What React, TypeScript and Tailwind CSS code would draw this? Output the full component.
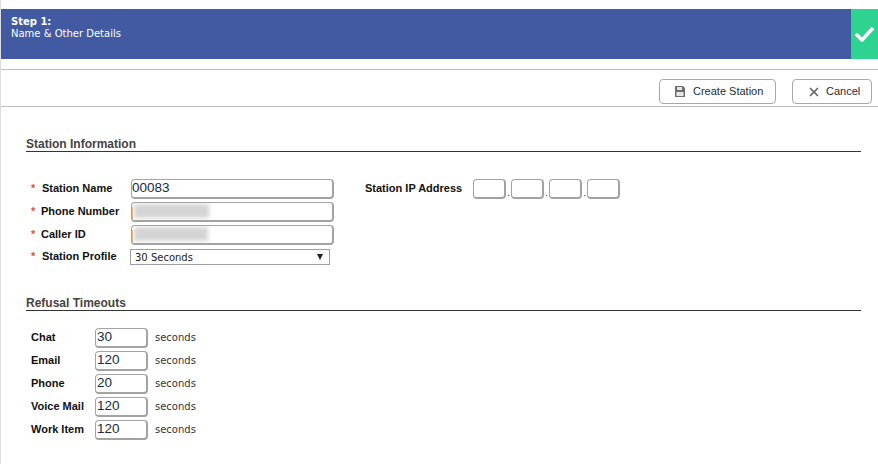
import { X } from "lucide-react";

const boxClass =
  "h-5 rounded-[4px] border border-[#a3a3a3] border-b-2 border-r-2 bg-white font-['Liberation_Sans',sans-serif] text-[13.5px] leading-[15px] text-[#1a2a3a] shrink-0";

const Star = () => <span className="w-[11px] shrink-0 pb-[2px] font-bold text-[#e0503a]">*</span>;

const StationRow = ({ label, mt, nudge, children }: { label: string; mt: string; nudge?: boolean; children: React.ReactNode }) => (
  <div className={`flex items-center ${mt}`}>
    <Star />
    <span className={`shrink-0 pb-[2px] font-bold text-[#111] ${nudge ? "-ml-px w-[90px]" : "w-[89px]"}`}>{label}</span>
    {children}
  </div>
);

const BlurredInput = ({ width }: { width: string }) => (
  <div className={`relative w-[203px] overflow-hidden ${boxClass}`}>
    <div className="absolute left-0 top-1 h-3 w-px bg-[#f0b060]" />
    <div className={`absolute left-[2px] top-[1px] h-[14px] ${width} bg-[#d4d4d4] blur-[2px]`} />
  </div>
);

const Timeout = ({ label, value, mt }: { label: string; value: string; mt: string }) => (
  <div className={`flex items-center ${mt}`}>
    <span className="w-16 shrink-0 pb-[2px] font-bold text-[#111]">{label}</span>
    <div className={`w-[53px] pl-px ${boxClass}`}>{value}</div>
    <span className="ml-[7px] pb-[2px] font-['DejaVu_Sans',sans-serif] text-[10px] text-[#333]">seconds</span>
  </div>
);

const Dot = () => <span className="flex h-5 w-[5px] items-end justify-center text-[9px] leading-[12px]">.</span>;

export default function App() {
  return (
    <div className="h-[464px] w-[878px] overflow-hidden border-l border-[#dddddd] bg-white pt-[9px] font-['Liberation_Sans',sans-serif] text-[11px]">
      {/* step banner */}
      <div className="flex h-[50px]">
        <div className="flex-1 bg-[#415aa2] pl-[10px] pt-[7px] font-['DejaVu_Sans',sans-serif] text-[10px] leading-3 text-white">
          <div className="font-bold">Step 1:</div>
          <div>Name &amp; Other Details</div>
        </div>
        <div className="flex w-[27px] items-center justify-center bg-[#2dd38f]">
          <svg width="21" height="16" viewBox="0 0 21 16" fill="none">
            <path d="M2 8l6 6L19 2" stroke="white" strokeWidth="3.6" />
          </svg>
        </div>
      </div>

      {/* toolbar */}
      <div className="mt-[10px] flex h-[38px] items-start justify-end gap-4 border-y border-[#bdbdbd] pr-[6px] pt-[9px]">
        <button className="flex h-[25px] w-[117px] items-center rounded-[4px] border border-[#a8a8a8] bg-white pl-[15px] text-[#1d2b3a]">
          <svg width="10" height="11" viewBox="0 0 10 11" className="mr-2">
            <path d="M0 0h8l2 2v9H0z" fill="#6d6d6d" />
            <rect x="2" y="1" width="5" height="3" fill="#e6e6e6" />
            <rect x="1.5" y="6" width="7" height="4" fill="#e6e6e6" />
          </svg>
          Create Station
        </button>
        <button className="flex h-[25px] w-20 items-center rounded-[4px] border border-[#a8a8a8] bg-white pl-[14px] text-[#1d2b3a]">
          <X size={14} strokeWidth={3} className="mr-[5px] text-[#666]" />
          Cancel
        </button>
      </div>

      <div className="w-[860px] pl-[25px]">
        {/* station information */}
        <div className="mt-[31px] h-[14px] border-b border-[#333] text-[12px] font-bold leading-[12px] text-[#444]">
          Station Information
        </div>
        <div className="mt-[27px] flex pl-[5px]">
          <div>
            <StationRow label="Station Name" mt="">
              <div className={`w-[203px] ${boxClass}`}>00083</div>
            </StationRow>
            <StationRow label="Phone Number" mt="mt-[3px]" nudge>
              <BlurredInput width="w-[75px]" />
            </StationRow>
            <StationRow label="Caller ID" mt="mt-[3px]" nudge>
              <BlurredInput width="w-[74px]" />
            </StationRow>
            <StationRow label="Station Profile" mt="mt-1 h-4">
              <div className="-ml-px flex h-4 w-[200px] items-center justify-between border border-[#a0a0a0] pl-1 pr-[6px] font-['DejaVu_Sans',sans-serif] text-[10px] text-[#222]">
                30 Seconds
                <span className="h-0 w-0 border-x-[3.5px] border-t-[6px] border-x-transparent border-t-[#222]" />
              </div>
            </StationRow>
          </div>
          <div className="ml-[31px] flex h-5 items-center">
            <span className="w-[108px] pb-[2px] font-bold text-[#111]">Station IP Address</span>
            <div className={`w-[33px] ${boxClass}`} />
            <Dot />
            <div className={`w-[33px] ${boxClass}`} />
            <Dot />
            <div className={`w-[33px] ${boxClass}`} />
            <Dot />
            <div className={`w-[33px] ${boxClass}`} />
          </div>
        </div>

        {/* refusal timeouts */}
        <div className="mt-8 h-[14px] border-b border-[#333] text-[12px] font-bold leading-[12px] text-[#444]">
          Refusal Timeouts
        </div>
        <div className="mt-[17px] pl-[5px]">
          <Timeout label="Chat" value="30" mt="" />
          <Timeout label="Email" value="120" mt="mt-[3px]" />
          <Timeout label="Phone" value="20" mt="mt-[3px]" />
          <Timeout label="Voice Mail" value="120" mt="mt-[3px]" />
          <Timeout label="Work Item" value="120" mt="mt-[3px]" />
        </div>
      </div>
    </div>
  );
}
